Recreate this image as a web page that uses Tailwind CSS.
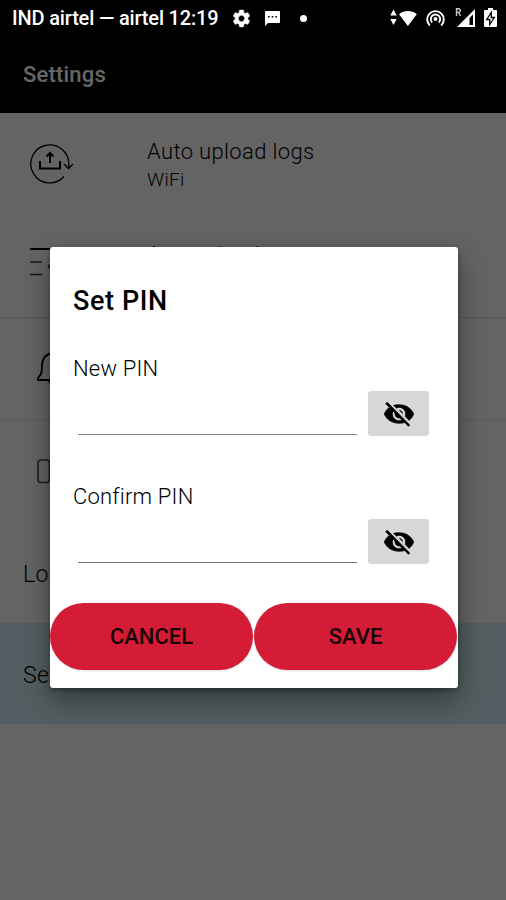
<!DOCTYPE html>
<html lang="en">
<head>
  <meta charset="UTF-8" />
  <meta name="viewport" content="width=device-width, initial-scale=1.0" />
  <title>Settings</title>
  <script src="https://cdn.jsdelivr.net/npm/@tailwindcss/browser@4"></script>
</head>
<body class="bg-[#fafafa] font-[Roboto,sans-serif] text-black">

  <div class="relative w-[506px] h-[900px] overflow-hidden">

    <!-- Status bar -->
    <div class="relative z-20 h-9 bg-black text-white flex items-center pl-3 pr-[9px]">
      <span class="text-[20px] leading-9 font-medium whitespace-nowrap w-[219px] tracking-[-0.17px]">IND airtel — airtel 12:19</span>
      <svg class="w-[21px] h-[21px] shrink-0" viewBox="0 0 24 24" fill="currentColor"><path stroke="#fff" stroke-width=".6" d="M19.14 12.94c.04-.3.06-.61.06-.94 0-.32-.02-.64-.07-.94l2.03-1.58a.49.49 0 0 0 .12-.61l-1.92-3.32a.488.488 0 0 0-.59-.22l-2.39.96c-.5-.38-1.03-.7-1.62-.94l-.36-2.54a.484.484 0 0 0-.48-.41h-3.84c-.24 0-.43.17-.47.41l-.36 2.54c-.59.24-1.13.57-1.62.94l-2.39-.96c-.22-.08-.47 0-.59.22L2.74 8.87c-.12.21-.08.47.12.61l2.03 1.58c-.05.3-.09.63-.09.94s.02.64.07.94l-2.03 1.58a.49.49 0 0 0-.12.61l1.92 3.32c.12.22.37.29.59.22l2.39-.96c.5.38 1.03.7 1.62.94l.36 2.54c.05.24.24.41.48.41h3.84c.24 0 .44-.17.47-.41l.36-2.54c.59-.24 1.13-.56 1.62-.94l2.39.96c.22.08.47 0 .59-.22l1.92-3.32c.12-.22.07-.47-.12-.61l-2.01-1.58zM12 15.6A3.61 3.61 0 0 1 8.400 12c0-1.980 1.620-3.600 3.600-3.600s3.600 1.620 3.600 3.600-1.620 3.600-3.600 3.600z"/></svg>
      <svg class="w-[15px] h-[15px] ml-[13px] shrink-0" viewBox="0 0 15 15"><path fill="#fff" d="M1 0h13a1 1 0 0 1 1 1v10a1 1 0 0 1-1 1H3l-3 3V1a1 1 0 0 1 1-1z"/><path fill="#000" d="M3 5h1.600v1.600H3zM6.700 5h1.600v1.600H6.700zM10.400 5H12v1.600h-1.600z"/></svg>
      <span class="w-[7px] h-[7px] ml-5 rounded-full bg-white"></span>
      <div class="ml-auto flex items-center">
        <svg class="w-[28px] h-[18px]" viewBox="0 0 27 18" fill="#fff"><path d="M4 .5l3.200 6H.8zM4 16l3.200-6H.8zM9.500 5.200C14.300 .8 22.500 .8 27.300 5.200L18.400 17z"/></svg>
        <svg class="w-[19px] h-[18px] ml-[9px]" viewBox="0 0 19 18" fill="none" stroke="#fff" stroke-width="1.900"><path d="M3.800 16.500a8.300 8.300 0 1 1 11.400 0M6.200 13.500a4.700 4.700 0 1 1 6.600 0"/><circle cx="9.500" cy="10" r="2" fill="#fff" stroke="none"/></svg>
        <svg class="w-[20px] h-[20px] ml-[10px]" viewBox="0 0 20 20"><path fill="#fff" d="M20 1v18H2z"/><path fill="#000" d="M14.500 10L18 6.500V17h-3.500z"/><path d="M1.500 8V.8h2a1.700 1.700 0 0 1 0 3.600h-2M3.500 4.500L5.500 8" fill="none" stroke="#ccc" stroke-width="1.400"/></svg>
        <svg class="w-[13px] h-[20px] ml-[9px]" viewBox="0 0 13 20"><path fill="#fff" d="M4 0h5v2h3a1 1 0 0 1 1 1v15a1 1 0 0 1-1 1H1a1 1 0 0 1-1-1V3a1 1 0 0 1 1-1h3z"/><path fill="#fff" stroke="#000" stroke-width="1.300" d="M7.300 4.500v5h3L5.700 16.500v-5h-3z"/></svg>
      </div>
    </div>

    <!-- App bar -->
    <div class="h-[77px] bg-black text-white flex items-center pl-[23px]">
      <h1 class="text-[22px] font-medium tracking-[0.2px]">Settings</h1>
    </div>

    <!-- Settings list -->
    <ul class="text-[22px] font-light tracking-[0.35px]">
      <li class="h-[102px] border-b border-[#efefef] flex items-center pl-[30px]">
        <svg class="w-[44px] h-[40px]" viewBox="0 0 44 40" fill="none" stroke="#000" stroke-width="1.300"><path d="M34 32.500A19 19 0 1 1 38.800 20.500v4M34 20l4.500 4.500L43 20"/><path stroke-width="2" d="M10 17v7.500h20V17M20 19V9.500M16.500 12.500L20 9l3.500 3.500"/></svg>
        <div class="ml-[73px] pt-1">
          <p class="leading-[28px]">Auto upload logs</p>
          <p class="text-[19px] leading-[28px]">WiFi</p>
        </div>
      </li>
      <li class="h-[103px] border-b border-[#d4d4d4] flex items-start pl-[30px] pt-[26px]">
        <svg class="w-[44px] h-[36px] mt-px" viewBox="0 0 44 36" fill="none" stroke="#333" stroke-width="1.700"><path stroke="#000" stroke-width="2" d="M0 7h40"/><path d="M0 20h12M0 32.500h12"/><circle cx="31" cy="24" r="12" stroke-dasharray="4 3"/></svg>
        <p class="ml-[73px] leading-[28px]">App upload</p>
      </li>
      <li class="h-[102px] border-b border-[#e2e2e2] flex items-center pl-[37px]">
        <svg class="w-[32px] h-[36px]" viewBox="0 0 32 36" fill="none" stroke="#000" stroke-width="1.800"><path d="M16 2C9 3 5 7 5 15c0 7-1 9-4 12v2h30v-2c-3-3-4-5-4-12 0-8-4-12-11-13zM12 29a4 4 0 0 0 8 0"/></svg>
      </li>
      <li class="h-[102px] flex items-center pl-[37px]">
        <svg class="w-[30px] h-[25px]" viewBox="0 0 30 25" fill="none" stroke="#444" stroke-width="1.600"><rect x="1" y="1" width="11.500" height="22.500" rx="3"/></svg>
      </li>
      <li class="h-[101px] flex items-center pl-[23px] pt-[5px] text-[23px]">Log level</li>
      <li class="h-[101px] bg-[#cdebf3] flex items-center pl-[23px] pt-[5px] text-[23px]">Set PIN</li>
    </ul>

    <!-- Dialog over the dimmed screen -->
    <div class="absolute inset-0 z-10 bg-black/60">
      <div class="absolute left-[50px] top-[247px] w-[408px] h-[441px] bg-white rounded-[3px] shadow-[0_12px_28px_rgba(0,0,0,0.4),0_2px_5px_rgba(0,0,0,0.3)]">
        <h2 class="pl-[23px] pt-[36px] text-[27px] leading-[36px] font-medium tracking-[0.6px]">Set PIN</h2>

        <label class="block pl-[23px] mt-[36px] text-[22px] leading-[28px] font-light tracking-[0.2px]">New PIN</label>
        <div class="flex pl-[28px] mt-[8px]">
          <input type="password" class="w-[279px] h-[44px] border-b border-[#888] outline-none" />
          <button class="ml-[11px] w-[61px] h-[45px] rounded-[3px] bg-[#d6d8d7] flex items-center justify-center">
            <svg class="w-[32px] h-[32px]" viewBox="0 0 24 24" fill="#000"><path stroke="#000" stroke-width=".6" d="M12 7c2.760 0 5 2.240 5 5 0 .65-.13 1.260-.36 1.830l2.920 2.920c1.510-1.260 2.700-2.890 3.430-4.750-1.730-4.390-6-6.900-11-6.900-1.400 0-2.740.1-3.980.4l2.160 2.160C10.740 7.130 11.350 7 12 7zM2 4.270l2.280 2.280.46.46C3.080 8.300 1.780 10.020 1 12c1.730 4.390 6 6.900 11 6.900 1.550 0 3.030-.1 4.380-.5l.42.42L19 21.270l1-1L3.270 3.270 2 4.270zM7.530 9.800l1.550 1.550c-.05.21-.08.43-.08.65 0 1.660 1.340 3 3 3 .22 0 .44-.03.65-.08l1.550 1.550c-.67.33-1.410.53-2.200.53-2.760 0-5-2.240-5-5 0-.79.2-1.530.53-2.200z"/><path d="M11.840 9.020l3.150 3.150.02-.16c0-1.660-1.340-3-3-3l-.17.01z"/></svg>
          </button>
        </div>

        <label class="block pl-[23px] mt-[47px] text-[22px] leading-[28px] font-light tracking-[0.2px]">Confirm PIN</label>
        <div class="flex pl-[28px] mt-[8px]">
          <input type="password" class="w-[279px] h-[44px] border-b border-[#777] outline-none" />
          <button class="ml-[11px] w-[61px] h-[45px] rounded-[3px] bg-[#d6d8d7] flex items-center justify-center">
            <svg class="w-[32px] h-[32px]" viewBox="0 0 24 24" fill="#000"><path stroke="#000" stroke-width=".6" d="M12 7c2.760 0 5 2.240 5 5 0 .65-.13 1.260-.36 1.830l2.920 2.920c1.510-1.260 2.700-2.890 3.430-4.750-1.730-4.390-6-6.900-11-6.900-1.400 0-2.740.1-3.980.4l2.160 2.160C10.740 7.130 11.350 7 12 7zM2 4.270l2.280 2.280.46.46C3.080 8.300 1.780 10.020 1 12c1.730 4.390 6 6.900 11 6.900 1.550 0 3.030-.1 4.380-.5l.42.42L19 21.270l1-1L3.270 3.270 2 4.270zM7.530 9.800l1.550 1.550c-.05.21-.08.43-.08.65 0 1.660 1.340 3 3 3 .22 0 .44-.03.65-.08l1.550 1.550c-.67.33-1.410.53-2.200.53-2.760 0-5-2.240-5-5 0-.79.2-1.530.53-2.200z"/><path d="M11.840 9.020l3.150 3.150.02-.16c0-1.660-1.340-3-3-3l-.17.01z"/></svg>
          </button>
        </div>

        <div class="flex gap-px mt-[39px]">
          <button class="w-[203px] h-[67px] rounded-full bg-[#d51c37] text-[22px] font-medium text-[#180206] shadow-sm">CANCEL</button>
          <button class="w-[203px] h-[67px] rounded-full bg-[#d51c37] text-[22px] font-medium text-[#180206] shadow-sm">SAVE</button>
        </div>
      </div>
    </div>

  </div>

</body>
</html>
